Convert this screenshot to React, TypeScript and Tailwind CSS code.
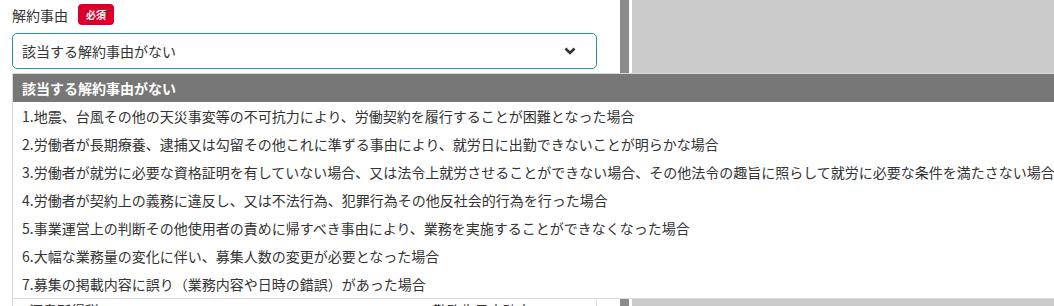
import React from "react"

const options = [
  "1.地震、台風その他の天災事変等の不可抗力により、労働契約を履行することが困難となった場合",
  "2.労働者が長期療養、逮捕又は勾留その他これに準ずる事由により、就労日に出勤できないことが明らかな場合",
  "3.労働者が就労に必要な資格証明を有していない場合、又は法令上就労させることができない場合、その他法令の趣旨に照らして就労に必要な条件を満たさない場合",
  "4.労働者が契約上の義務に違反し、又は不法行為、犯罪行為その他反社会的行為を行った場合",
  "5.事業運営上の判断その他使用者の責めに帰すべき事由により、業務を実施することができなくなった場合",
  "6.大幅な業務量の変化に伴い、募集人数の変更が必要となった場合",
  "7.募集の掲載内容に誤り（業務内容や日時の錯誤）があった場合",
]

export default function App() {
  return (
    <div className="relative flex h-[306px] w-[1054px] overflow-hidden bg-white font-['Noto_Sans_CJK_JP',sans-serif] text-[#333]">
      {/* form panel */}
      <div className="w-[620px] shrink-0 px-3 pt-1">
        <div className="flex h-[21px] items-center gap-[10px]">
          <span className="text-sm leading-none">解約事由</span>
          <span className="flex h-[21px] w-9 items-center justify-center rounded-sm bg-[#d7002b] text-[10px] font-bold leading-none text-white">
            必須
          </span>
        </div>
        <div className="mt-2 flex h-9 w-[585px] items-center justify-between rounded-[5px] border border-[#2b9595] pl-[9px] pr-5">
          <span className="text-sm">該当する解約事由がない</span>
          <svg width="12" height="8" viewBox="0 0 12 8" fill="none">
            <path d="M1.5 1.5 L6 6 L10.5 1.5" stroke="#333" strokeWidth="2.6" />
          </svg>
        </div>
        <div className="mt-[228px] flex h-10 w-[585px] border-x border-[#ddd] text-sm">
          <span className="w-[420px] pl-4 pt-[3px]">源泉所得税</span>
          <span className="pt-[3px]">勤務先予定確定</span>
        </div>
      </div>

      {/* scrollbar + side panel */}
      <div className="w-[9px] shrink-0 bg-[#8a8a8a]" />
      <div className="w-[3px] shrink-0 bg-white" />
      <div className="flex-1 bg-[#cbcbcb]" />

      {/* open dropdown */}
      <ul className="absolute left-3 top-[73px] w-max min-w-[1100px] whitespace-nowrap border border-[#d9d9d9] bg-white text-sm">
        <li className="flex h-7 items-center bg-[#777] pl-[9px] font-bold text-white">該当する解約事由がない</li>
        {options.map((o) => (
          <li key={o} className="flex h-7 items-center pl-[9px]">
            {o}
          </li>
        ))}
      </ul>
    </div>
  )
}
